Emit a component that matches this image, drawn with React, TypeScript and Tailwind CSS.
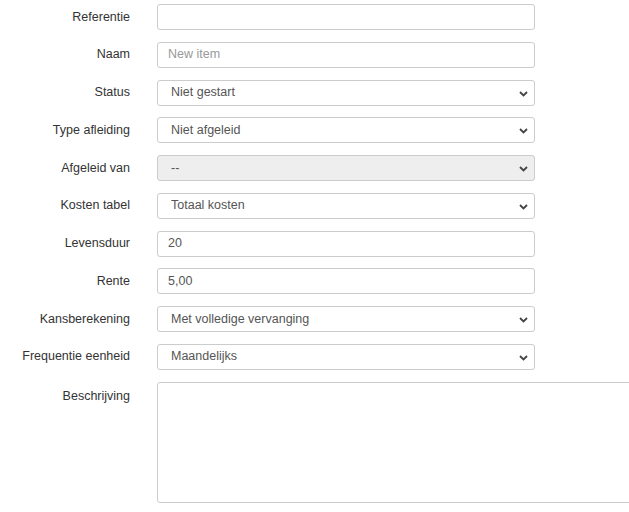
import React from "react";

type Field = {
  label: string;
  kind: "input" | "select";
  value?: string;
  placeholder?: string;
  disabled?: boolean;
};

const fields: Field[] = [
  { label: "Referentie", kind: "input" },
  { label: "Naam", kind: "input", placeholder: "New item" },
  { label: "Status", kind: "select", value: "Niet gestart" },
  { label: "Type afleiding", kind: "select", value: "Niet afgeleid" },
  { label: "Afgeleid van", kind: "select", value: "--", disabled: true },
  { label: "Kosten tabel", kind: "select", value: "Totaal kosten" },
  { label: "Levensduur", kind: "input", value: "20" },
  { label: "Rente", kind: "input", value: "5,00" },
  { label: "Kansberekening", kind: "select", value: "Met volledige vervanging" },
  { label: "Frequentie eenheid", kind: "select", value: "Maandelijks" },
];

const Chevron = () => (
  <svg width="9" height="6" viewBox="0 0 9 6" className="shrink-0 mt-[2px]">
    <path d="M1 1l3.5 3.5L8 1" fill="none" stroke="#444" strokeWidth="1.8" />
  </svg>
);

const Control = ({ f }: { f: Field }) => {
  const base =
    "h-[26px] w-[378px] rounded-[3px] border border-[#cccccc] flex items-center text-[12.5px]";
  if (f.kind === "select") {
    return (
      <div
        className={`${base} pl-[13px] pr-[6px] justify-between ${
          f.disabled ? "bg-[#eeeeee]" : "bg-white"
        }`}
      >
        <span className="text-[#555555]">{f.value}</span>
        <Chevron />
      </div>
    );
  }
  return (
    <div className={`${base} bg-white px-[10px]`}>
      {f.value ? (
        <span className="text-[#555555]">{f.value}</span>
      ) : (
        <span className="text-[#999999]">{f.placeholder}</span>
      )}
    </div>
  );
};

export default function App() {
  return (
    <div
      className="w-[629px] h-[512px] overflow-hidden bg-white pt-[4px]"
      style={{ fontFamily: '"Liberation Sans", Arial, sans-serif' }}
    >
      <div className="grid grid-cols-[130px_auto] gap-x-[27px] gap-y-[11.75px]">
        {fields.map((f) => (
          <React.Fragment key={f.label}>
            <div className="h-[26px] flex items-center justify-end text-[12.5px] text-[#333333]">
              {f.label}
            </div>
            <Control f={f} />
          </React.Fragment>
        ))}
        <div className="pt-[5px] text-right text-[12.5px] text-[#333333]">
          Beschrijving
        </div>
        <div className="h-[121px] w-[500px] rounded-[3px] border border-[#cccccc] bg-white" />
      </div>
    </div>
  );
}
